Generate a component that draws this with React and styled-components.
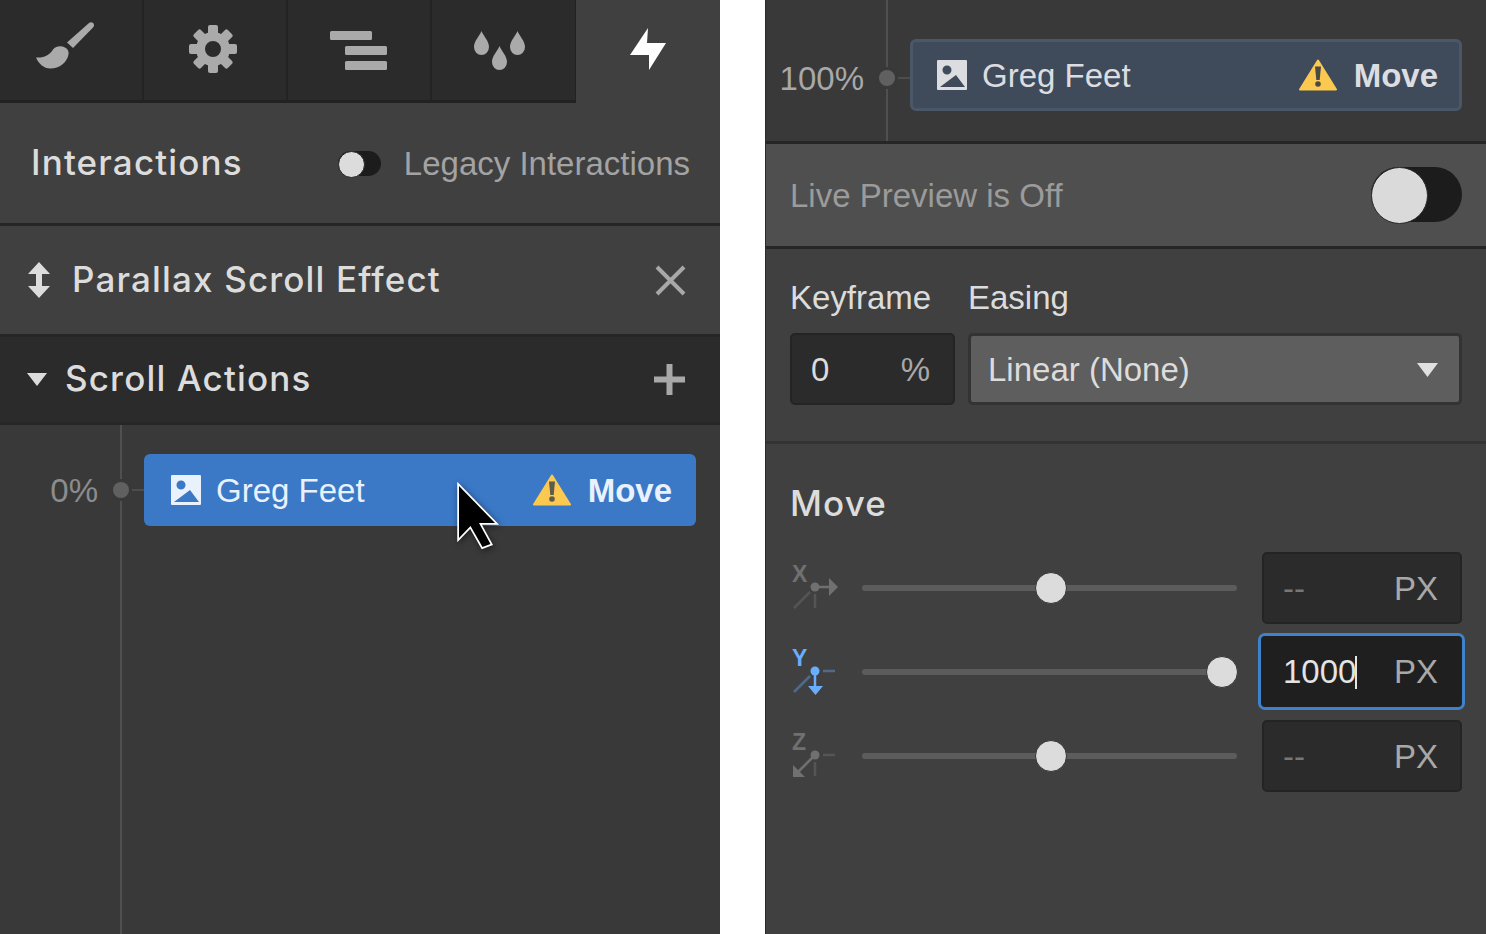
import React from "react";
import styled, { createGlobalStyle } from "styled-components";

const Global = createGlobalStyle`
  html, body { margin: 0; padding: 0; background: #fff; }
  body { width: 1486px; height: 934px; overflow: hidden; font-family: "Liberation Sans", Arial, sans-serif; }
  * { box-sizing: border-box; }
`;

const Page = styled.div`
  display: grid;
  grid-template-columns: 720px 721px;
  column-gap: 45px;
  width: 1486px;
  height: 934px;
  font-size: 33px;
  position: relative;
`;
const Panel = styled.section`
  display: flex;
  flex-direction: column;
  height: 934px;
  background: #404040;
  overflow: hidden;
  border-left: ${(p) => (p.$edge ? "1px solid #2a2a2a" : "none")};
`;
const TabBar = styled.nav`
  display: flex;
  width: 576px;
  height: 103px;
  flex: none;
  background: #2b2b2b;
  border-bottom: 3px solid #222;
  border-right: 1px solid #222;
`;
const Tab = styled.div`
  width: 144px;
  height: 100px;
  flex: none;
  border-right: 2px solid #232323;
  &:last-child { border-right: none; width: 143px; }
  svg { display: block; }
`;
const ActiveTab = styled.div`
  width: 144px;
  height: 103px;
  svg { display: block; }
`;
const TabRow = styled.div`
  display: flex;
  flex: none;
`;
const Heading = styled.div`
  height: 123px;
  flex: none;
  padding: 0 31px 0;
  display: flex;
  align-items: center;
  justify-content: space-between;
  border-bottom: 3px solid #262626;
`;
const Strong = styled.span`
  font-family: Inter, "Liberation Sans", sans-serif;
  font-weight: 500;
  font-size: 35px;
  letter-spacing: 1.15px;
  margin-bottom: 2px;
  color: ${(p) => p.$color || "#dcdcdc"};
`;
const ActionsTitle = styled(Strong)`
  margin-bottom: 4px;
`;
const LegacyWrap = styled.div`
  display: flex;
  align-items: center;
  gap: 23px;
  margin-right: -1px;
  color: #a3a3a3;
`;
const LegacyText = styled.span`
  padding-top: 2px;
`;
const SmallSwitch = styled.span`
  display: block;
  position: relative;
  width: 43px;
  height: 25px;
  border-radius: 13px;
  background: #1c1c1c;
  &::after {
    content: "";
    position: absolute;
    left: 0;
    top: 0;
    width: 25px;
    height: 25px;
    border-radius: 50%;
    background: #dcdcdc;
    border: 1px solid #222;
  }
`;
const EffectRow = styled.div`
  height: 111px;
  flex: none;
  padding: 0 34px 0 28px;
  display: flex;
  align-items: center;
  justify-content: space-between;
  border-bottom: 3px solid #262626;
`;
const RowStart = styled.div`
  display: flex;
  align-items: center;
  gap: ${(p) => p.$gap || 22}px;
`;
const ActionsBar = styled.div`
  height: 88px;
  flex: none;
  padding: 0 35px 0 27px;
  display: flex;
  align-items: center;
  justify-content: space-between;
  background: #2b2b2b;
  border-bottom: 3px solid #262626;
`;
const Timeline = styled.div`
  display: grid;
  grid-template-columns: auto 46px 552px;
  justify-content: end;
  align-items: start;
  padding-right: 24px;
  background: #393939;
  flex: ${(p) => (p.$fixed ? "none" : "1")};
  height: ${(p) => (p.$fixed ? "141px" : "auto")};
  --top: ${(p) => p.$top}px;
  --drop: ${(p) => p.$drop || 0}px;
`;
const Percent = styled.span`
  margin-top: calc(var(--top) + var(--drop) + 1px);
  height: 72px;
  line-height: 72px;
  color: ${(p) => p.$color};
  text-align: right;
`;
const Rail = styled.div`
  position: relative;
  align-self: stretch;
  &::before {
    content: "";
    position: absolute;
    left: 21.5px;
    top: 0;
    bottom: 0;
    width: 2.5px;
    background: #505050;
  }
  &::after {
    content: "";
    position: absolute;
    left: 31px;
    right: 0;
    top: calc(var(--top) + var(--drop) + 35px);
    height: 2px;
    background: #4d4d4d;
  }
`;
const RailDot = styled.i`
  position: absolute;
  left: 15px;
  top: calc(var(--top) + var(--drop) + 28px);
  width: 16px;
  height: 16px;
  border-radius: 50%;
  background: #606060;
  box-shadow: 0 0 0 3px #393939;
  z-index: 1;
`;
const ActionCard = styled.div`
  margin-top: var(--top);
  height: 72px;
  display: flex;
  align-items: center;
  padding: 0 24px 0 27px;
  border-radius: 6px;
  background: ${(p) => (p.$dim ? "#3f4b5b" : "#3b78c5")};
  border: ${(p) => (p.$dim ? "3px solid #4a5768" : "none")};
  color: ${(p) => (p.$dim ? "#dcdde0" : "#e8f1fc")};
  ${(p) => p.$dim && "padding: 0 21px 0 24px;"}
`;
const CardName = styled.span`
  margin-left: 15px;
  padding-top: 2px;
  flex: 1;
`;
const CardKind = styled.b`
  margin-left: 17px;
  padding-top: 2px;
  font-weight: 700;
`;
const Pointer = styled.svg`
  position: absolute;
  left: 450px;
  top: 476px;
  filter: drop-shadow(1px 2px 3px rgba(0, 0, 0, 0.5));
`;
const PreviewBar = styled.div`
  height: 108px;
  flex: none;
  padding: 0 24px;
  display: flex;
  align-items: center;
  justify-content: space-between;
  background: #4f4f4f;
  border-top: 3px solid #262626;
  border-bottom: 3px solid #262626;
  color: #9b9b9b;
`;
const PreviewText = styled.span`
  padding-top: 2px;
`;
const BigSwitch = styled.span`
  display: block;
  position: relative;
  width: 91px;
  height: 55px;
  margin-bottom: 2px;
  border-radius: 28px;
  background: #1c1c1c;
  &::after {
    content: "";
    position: absolute;
    left: 0;
    top: 0;
    width: 55px;
    height: 55px;
    border-radius: 50%;
    background: #dadada;
    border: 1px solid #2a2a2a;
  }
`;
const KeyframeArea = styled.div`
  height: 195px;
  flex: none;
  padding: 29px 24px 0;
  display: grid;
  grid-template-columns: 165px 494px;
  grid-template-rows: 40px 72px;
  column-gap: 13px;
  row-gap: 15px;
  align-content: start;
  border-bottom: 3px solid #333;
  color: #dcdcdc;
`;
const FieldLabel = styled.label`
  line-height: 40px;
`;
const NumberBox = styled.div`
  height: 72px;
  display: flex;
  align-items: center;
  justify-content: space-between;
  padding: 2px ${(p) => p.$right || 23}px 0 19px;
  background: #2b2b2b;
  border: 2px solid #242424;
  border-radius: 5px;
  ${(p) => p.$focus && `
    background: #1f1f1f;
    border: 3px solid #3f82cc;
    margin: -3px -3px -2px -4px;
    height: 77px;
    padding: 0 24px 0 22px;
    border-radius: 7px;
  `}
`;
const Typed = styled.span`
  display: inline-block;
  color: ${(p) => p.$color || "#dcdcdc"};
`;
const Caret = styled.span`
  display: inline-block;
  width: 2px;
  height: 33px;
  margin-left: -1px;
  background: #e4e4e4;
  vertical-align: -6px;
`;
const Unit = styled.span`
  color: #a8a8a8;
`;
const SelectBox = styled.div`
  height: 72px;
  display: flex;
  align-items: center;
  justify-content: space-between;
  padding: 2px 21px 0 17px;
  background: #5e5e5e;
  border: 3px solid #333;
  border-radius: 5px;
`;
const MoveArea = styled.div`
  padding: 39px 24px 0 24px;
  display: flex;
  flex-direction: column;
`;
const MoveTitle = styled(Strong)`
  display: block;
  margin-bottom: 28px;
  line-height: 41px;
`;
const AxisRow = styled.div`
  display: grid;
  grid-template-columns: 72px 375px 25px 200px;
  align-items: center;
  height: 72px;
  margin-bottom: 12px;
`;
const AxisIcon = styled.svg`
  display: block;
`;
const AxisLetter = styled.text`
  font-family: "Liberation Sans", sans-serif;
  font-weight: 700;
  font-size: 23px;
`;
const Track = styled.div`
  position: relative;
  height: 6px;
  border-radius: 3px;
  background: #5c5c5c;
`;
const Thumb = styled.span`
  position: absolute;
  top: -13px;
  left: ${(p) => p.$left}px;
  width: 32px;
  height: 32px;
  border-radius: 50%;
  background: #dcdcdc;
  border: 1px solid #333;
`;

const Gear = () => (
  <g fill="#aaa">
    {[0, 45, 90, 135, 180, 225, 270, 315].map((a) => (
      <rect key={a} x="64" y="25" width="10" height="15" rx="2" transform={`rotate(${a} 69 49)`} />
    ))}
    <circle cx="69" cy="49" r="12.5" fill="none" stroke="#aaa" strokeWidth="9" />
  </g>
);

const Drop = ({ x, y }) => (
  <path
    fill="#aaa"
    d={`M${x} ${y}c2 5 7.500 10 7.500 16a7.500 8 0 0 1-15 0c0-6 5.500-11 7.500-16z`}
  />
);

const Tabs = () => (
  <TabRow>
    <TabBar>
      <Tab>
        <svg width="142" height="100" viewBox="0 0 142 100">
          <path fill="#aaa" d="M36 57.500c9 .5 14-3 17-8 3-3.500 8-4 12-2 3 1.500 4 4 3.500 7-1.500 8-9 14-18 14-7 0-12-5-14.500-11z" />
          <path fill="#aaa" d="M67 42.500 89 23c2-1.500 5-.5 5 2.500l-.5 1.500L73 48z" />
        </svg>
      </Tab>
      <Tab>
        <svg width="142" height="100" viewBox="0 0 142 100">
          <Gear />
        </svg>
      </Tab>
      <Tab>
        <svg width="142" height="100" viewBox="288 0 142 100">
          <rect x="330" y="31" width="42" height="9" rx="1.500" fill="#aaa" />
          <rect x="345" y="46" width="42" height="9" rx="1.500" fill="#aaa" />
          <rect x="345" y="61" width="42" height="9" rx="1.500" fill="#aaa" />
        </svg>
      </Tab>
      <Tab>
        <svg width="142" height="100" viewBox="432 0 142 100">
          <Drop x={481.5} y={31} />
          <Drop x={499.5} y={46} />
          <Drop x={517.5} y={31} />
        </svg>
      </Tab>
    </TabBar>
    <ActiveTab>
      <svg width="144" height="103" viewBox="576 0 144 103">
        <path fill="#fff" d="M648 28l-1 15h19l-17 27V55h-19z" />
      </svg>
    </ActiveTab>
  </TabRow>
);

const PictureIcon = () => (
  <svg width="30" height="30" viewBox="0 0 30 30">
    <path
      fill="currentColor"
      fillRule="evenodd"
      d="M1 0h28a1 1 0 0 1 1 1v28a1 1 0 0 1-1 1H1a1 1 0 0 1-1-1V1a1 1 0 0 1 1-1zM10 5.500a4.500 4.500 0 1 0 0 9 4.500 4.500 0 0 0 0-9zM3 27h25L19 15z"
    />
  </svg>
);

const WarnIcon = ({ mark }) => (
  <svg width="38" height="32" viewBox="0 0 38 32">
    <path fill="#fbc94f" stroke="#fbc94f" strokeWidth="2" strokeLinejoin="round" d="M19 1.500 37 30.500H1z" />
    <path fill={mark} d="M16 7.500h6l-1.300 13.500h-3.400z" />
    <circle cx="19" cy="25" r="2.800" fill={mark} />
  </svg>
);

const Card = ({ dim }) => (
  <ActionCard $dim={dim}>
    <PictureIcon />
    <CardName>Greg Feet</CardName>
    <WarnIcon mark={dim ? "#4a4a45" : "#5c5b50"} />
    <CardKind>Move</CardKind>
  </ActionCard>
);

const Left = () => (
  <Panel>
    <Tabs />
    <Heading>
      <Strong>Interactions</Strong>
      <LegacyWrap>
        <SmallSwitch />
        <LegacyText>Legacy Interactions</LegacyText>
      </LegacyWrap>
    </Heading>
    <EffectRow>
      <RowStart>
        <svg width="22" height="36" viewBox="0 0 22 36">
          <path fill="#dcdcdc" d="M11 0l11 12h-8v12h8L11 36 0 24h8V12H0z" />
        </svg>
        <Strong>Parallax Scroll Effect</Strong>
      </RowStart>
      <svg width="31" height="31" viewBox="0 0 31 31">
        <path stroke="#a8a8a8" strokeWidth="4" d="M2 2l27 27M29 2 2 29" />
      </svg>
    </EffectRow>
    <ActionsBar>
      <RowStart $gap={18}>
        <svg width="20" height="13" viewBox="0 0 20 13">
          <path fill="#dcdcdc" d="M0 0h20L10 13z" />
        </svg>
        <ActionsTitle>Scroll Actions</ActionsTitle>
      </RowStart>
      <svg width="31" height="31" viewBox="0 0 31 31">
        <path stroke="#a8a8a8" strokeWidth="6" d="M15.500 0v31M0 15.500h31" />
      </svg>
    </ActionsBar>
    <Timeline $top={29}>
      <Percent $color="#8c8c8c">0%</Percent>
      <Rail>
        <RailDot />
      </Rail>
      <Card />
    </Timeline>
  </Panel>
);

const XIcon = () => (
  <AxisIcon width="50" height="60" viewBox="790 558 50 60">
    <AxisLetter x="792" y="582" fill="#707070">X</AxisLetter>
    <path stroke="#555" strokeWidth="2.500" d="M794 608l16-16M815 594v14" />
    <path stroke="#707070" strokeWidth="2.500" d="M815 587h16" />
    <path fill="#707070" d="M829 578l9 9-9 9z" />
    <circle cx="815" cy="587" r="4.500" fill="#707070" />
  </AxisIcon>
);
const YIcon = () => (
  <AxisIcon width="50" height="60" viewBox="790 642 50 60">
    <AxisLetter x="792" y="666" fill="#68aefc">Y</AxisLetter>
    <path stroke="#4f6b8c" strokeWidth="2.500" d="M794 692l16-16M823 671h12" />
    <path stroke="#68aefc" strokeWidth="2.500" d="M815 671v16" />
    <path fill="#68aefc" d="M808 686h15l-7.500 9z" />
    <circle cx="815" cy="671" r="4.500" fill="#68aefc" />
  </AxisIcon>
);
const ZIcon = () => (
  <AxisIcon width="50" height="60" viewBox="790 726 50 60">
    <AxisLetter x="792" y="750" fill="#707070">Z</AxisLetter>
    <path stroke="#555" strokeWidth="2.500" d="M823 755h12M815 762v14" />
    <path stroke="#707070" strokeWidth="2.500" d="M813 757l-16 16" />
    <path fill="#707070" d="M793 765v12h12z" />
    <circle cx="815" cy="755" r="4.500" fill="#707070" />
  </AxisIcon>
);

const axes = [
  { key: "x", Icon: XIcon, left: 173, value: "--" },
  { key: "y", Icon: YIcon, left: 344, value: "1000", focus: true },
  { key: "z", Icon: ZIcon, left: 173, value: "--" },
];

const Right = () => (
  <Panel $edge>
    <Timeline $fixed $top={39} $drop={3}>
      <Percent $color="#a8a8a8">100%</Percent>
      <Rail>
        <RailDot />
      </Rail>
      <Card dim />
    </Timeline>
    <PreviewBar>
      <PreviewText>Live Preview is Off</PreviewText>
      <BigSwitch />
    </PreviewBar>
    <KeyframeArea>
      <FieldLabel>Keyframe</FieldLabel>
      <FieldLabel>Easing</FieldLabel>
      <NumberBox>
        <Typed>0</Typed>
        <Unit>%</Unit>
      </NumberBox>
      <SelectBox>
        <Typed>Linear (None)</Typed>
        <svg width="21" height="14" viewBox="0 0 21 14">
          <path fill="#e0e0e0" d="M0 0h21L10.500 14z" />
        </svg>
      </SelectBox>
    </KeyframeArea>
    <MoveArea>
      <MoveTitle>Move</MoveTitle>
      {axes.map(({ key, Icon, left, value, focus }) => (
        <AxisRow key={key}>
          <Icon />
          <Track>
            <Thumb $left={left} />
          </Track>
          <span />
          <NumberBox $focus={focus} $right={22}>
            <Typed $color={focus ? "#e4e4e4" : "#777"}>
              {value}
              {focus && <Caret />}
            </Typed>
            <Unit>PX</Unit>
          </NumberBox>
        </AxisRow>
      ))}
    </MoveArea>
  </Panel>
);

export default function App() {
  return (
    <Page>
      <Global />
      <Left />
      <Right />
      <Pointer width="56" height="78" viewBox="450 476 56 78">
        <path
          fill="#000"
          stroke="#fff"
          strokeWidth="3.500"
          paintOrder="stroke"
          d="M459 486v52l11.500-12 12 21 8-3-11.500-21h16z"
        />
      </Pointer>
    </Page>
  );
}
